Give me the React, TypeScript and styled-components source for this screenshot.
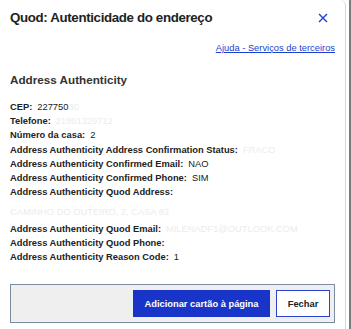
import styled, {createGlobalStyle} from 'styled-components';

const GlobalStyle = createGlobalStyle`
    html, body {
        margin: 0;
        padding: 0;
        background: #ffffff;
    }
    body {
        font-family: "Liberation Sans", Arial, sans-serif;
        color: #222222;
    }
`;

const Frame = styled.div`
    display: flex;
    width: 351px;
    height: 329px;
    overflow: hidden;
`;

const Dialog = styled.div`
    flex: 0 0 346px;
    box-sizing: border-box;
    border-right: 1px solid #d6d6d6;
    border-top-right-radius: 6px;
    padding: 0 10px;
    display: flex;
    flex-direction: column;
`;

const Edge = styled.div`
    flex: 0 0 2px;
    margin-left: 3px;
    background: #7c7c7c;
`;

const Header = styled.header`
    display: flex;
    align-items: center;
    justify-content: space-between;
    padding-top: 8px;
    height: 20px;
`;

const Title = styled.h1`
    margin: 0;
    font-size: 13.3px;
    font-weight: 700;
    letter-spacing: -0.35px;
    line-height: 20px;
    color: #222222;
`;

const CloseButton = styled.button`
    border: none;
    background: none;
    padding: 0;
    margin-right: 7px;
    width: 10px;
    height: 10px;
    display: flex;
    cursor: pointer;
`;

const HelpRow = styled.div`
    display: flex;
    justify-content: flex-end;
    margin-top: 14px;
    line-height: 12px;
`;

const HelpLink = styled.a`
    font-size: 9.33px;
    color: #1c3fd0;
    text-decoration: underline;
`;

const Section = styled.h2`
    margin: 18px 0 0;
    font-size: 11.7px;
    font-weight: 700;
    line-height: 16px;
    color: #333333;
`;

const Fields = styled.div`
    margin-top: 12px;
    font-size: 9.33px;
    line-height: 14.2px;
`;

const Row = styled.div`
    white-space: nowrap;
`;

const Label = styled.span`
    font-weight: 700;
    color: #222222;
`;

const Value = styled.span<{ $faint?: boolean }>`
    margin-left: 5px;
    color: ${props => props.$faint ? '#ececec' : '#222222'};
`;

const Hidden = styled.span`
    color: #ececec;
`;

const BlockValue = styled.div`
    padding: 6px 0 2px;
    color: #ececec;
`;

const Footer = styled.div`
    margin-top: 20px;
    box-sizing: border-box;
    height: 39px;
    border: 1px solid #7d8ba0;
    background: #efefef;
    display: flex;
    justify-content: flex-end;
    align-items: flex-start;
    gap: 6px;
    padding: 5px 4px 0 0;
`;

const Button = styled.button<{ $primary?: boolean }>`
    box-sizing: border-box;
    height: 27px;
    padding: 0;
    width: ${props => props.$primary ? '137px' : '54px'};
    font-family: "Liberation Sans", Arial, sans-serif;
    font-size: 9.33px;
    font-weight: 700;
    border: 1px solid ${props => props.$primary ? '#1935c9' : '#2642cf'};
    background: ${props => props.$primary ? '#1935c9' : '#ffffff'};
    color: ${props => props.$primary ? '#ffffff' : '#222222'};
    cursor: pointer;
`;

interface IField {
    label: string;
    value?: string;
    hidden?: string;
    faint?: boolean;
    block?: boolean;
}

const fields: IField[] = [
    {label: "CEP:", value: "227750", hidden: "30"},
    {label: "Telefone:", value: "21991329712", faint: true},
    {label: "Número da casa:", value: "2"},
    {label: "Address Authenticity Address Confirmation Status:", value: "FRACO", faint: true},
    {label: "Address Authenticity Confirmed Email:", value: "NAO"},
    {label: "Address Authenticity Confirmed Phone:", value: "SIM"},
    {label: "Address Authenticity Quod Address:", value: "CAMINHO DO OUTEIRO, 2, CASA 82", block: true},
    {label: "Address Authenticity Quod Email:", value: "MILENADF1@OUTLOOK.COM", faint: true},
    {label: "Address Authenticity Quod Phone:"},
    {label: "Address Authenticity Reason Code:", value: "1"},
];

function App() {
    return (
        <>
            <GlobalStyle/>
            <Frame>
                <Dialog>
                    <Header>
                        <Title>Quod: Autenticidade do endereço</Title>
                        <CloseButton aria-label="Fechar">
                            <svg width="10" height="10" viewBox="0 0 10 10">
                                <path d="M1 1 L9 9 M9 1 L1 9" stroke="#1f3fd0" strokeWidth="1.4" fill="none"/>
                            </svg>
                        </CloseButton>
                    </Header>
                    <HelpRow>
                        <HelpLink href="#">Ajuda - Serviços de terceiros</HelpLink>
                    </HelpRow>
                    <Section>Address Authenticity</Section>
                    <Fields>
                        {fields.map((f) => (
                            <div key={f.label}>
                                <Row>
                                    <Label>{f.label}</Label>
                                    {f.value && !f.block &&
                                        <Value $faint={f.faint}>{f.value}{f.hidden && <Hidden>{f.hidden}</Hidden>}</Value>}
                                </Row>
                                {f.block && <BlockValue>{f.value}</BlockValue>}
                            </div>
                        ))}
                    </Fields>
                    <Footer>
                        <Button $primary>Adicionar cartão à página</Button>
                        <Button>Fechar</Button>
                    </Footer>
                </Dialog>
                <Edge/>
            </Frame>
        </>
    );
}

export default App;
